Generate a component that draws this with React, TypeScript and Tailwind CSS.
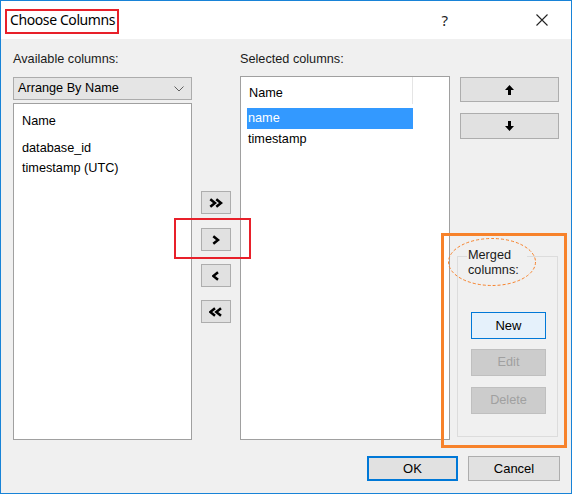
import React from "react";

const sans = "font-['Liberation_Sans',Arial,sans-serif]";

function Chevrons({ dir, double }: { dir: "left" | "right"; double?: boolean }) {
  const one = dir === "right" ? "M1.3 1.2 L6 5 L1.3 8.8" : "M6 1.2 L1.3 5 L6 8.8";
  return (
    <svg width={double ? 14 : 8} height="10" viewBox={double ? "0 0 14 10" : "0 0 8 10"}>
      <path d={one} fill="none" stroke="#000" strokeWidth="2.5" />
      {double && <path d={one} transform="translate(6 0)" fill="none" stroke="#000" strokeWidth="2.5" />}
    </svg>
  );
}

function Arrow({ up }: { up?: boolean }) {
  return (
    <svg width="9" height="10" viewBox="0 0 9 10">
      <path
        d={up ? "M4.5 0 L9 5 L6 5 L6 10 L3 10 L3 5 L0 5 Z" : "M4.5 10 L9 5 L6 5 L6 0 L3 0 L3 5 L0 5 Z"}
        fill="#000"
      />
    </svg>
  );
}

function SmallButton({ children, className }: { children: React.ReactNode; className?: string }) {
  return (
    <div className={`h-[23px] flex items-center justify-center bg-[#e1e1e1] border border-[#adadad] ${className ?? ""}`}>
      {children}
    </div>
  );
}

export default function App() {
  return (
    <div className={`relative w-[572px] h-[494px] border border-[#1883d7] bg-[#f0f0f0] flex flex-col text-[12.7px] text-black ${sans}`}>
      {/* Title bar */}
      <div className="h-[38px] bg-white flex items-center pl-[9px] shrink-0">
        <span className="text-[14px] tracking-[-0.4px] font-['Noto_Sans',sans-serif] leading-none">Choose Columns</span>
        <span className="ml-auto mr-[88px] text-[15px] font-['Noto_Sans',sans-serif] text-[#222]">?</span>
        <svg width="12" height="12" viewBox="0 0 12 12" className="mr-[23px]">
          <path d="M0.5 0.5 L11.5 11.5 M11.5 0.5 L0.5 11.5" stroke="#222" strokeWidth="1.1" />
        </svg>
      </div>

      {/* Body */}
      <div className="flex-1 pl-[12px] pt-[13px]">
        <div className="flex">
          {/* Available columns */}
          <div className="w-[179px] flex flex-col">
            <div className="h-[15px] leading-[15px] text-[#1a1a1a]">Available columns:</div>
            <div className="mt-[10px] h-[23px] bg-[#e5e5e5] border border-[#acacac] flex items-center pl-[4px] pr-[7px]">
              <span>Arrange By Name</span>
              <svg width="10" height="6" viewBox="0 0 10 6" className="ml-auto">
                <path d="M0.5 0.5 L5 5 L9.5 0.5" fill="none" stroke="#606060" strokeWidth="1" />
              </svg>
            </div>
            <div className="mt-[3px] h-[337px] bg-white border border-[#a0a0a0] pl-[8px]">
              <div className="mt-[9px] h-[16px] leading-[16px]">Name</div>
              <div className="mt-[11px] h-[16px] leading-[16px]">database_id</div>
              <div className="mt-[4px] h-[16px] leading-[16px]">timestamp (UTC)</div>
            </div>
          </div>

          {/* Move buttons */}
          <div className="ml-[9px] w-[30px] pt-[139px] flex flex-col">
            <SmallButton>
              <Chevrons dir="right" double />
            </SmallButton>
            <SmallButton className="mt-[14px]">
              <Chevrons dir="right" />
            </SmallButton>
            <SmallButton className="mt-[13px]">
              <Chevrons dir="left" />
            </SmallButton>
            <SmallButton className="mt-[13px]">
              <Chevrons dir="left" double />
            </SmallButton>
          </div>

          {/* Selected columns */}
          <div className="ml-[9px] w-[210px] flex flex-col">
            <div className="h-[15px] leading-[15px] text-[#1a1a1a]">Selected columns:</div>
            <div className="mt-[9px] h-[364px] bg-white border border-[#a0a0a0] flex flex-col">
              <div className="h-[27px] flex">
                <div className="w-[172px] border-r border-[#e5e5e5] pl-[8px] pt-[7px]">Name</div>
              </div>
              <div className="ml-[6px] mt-[4px] w-[166px] h-[21px] bg-[#3399ff] text-white flex items-center pl-[1px]">
                name
              </div>
              <div className="ml-[7px] h-[21px] flex items-center">timestamp</div>
            </div>
          </div>

          {/* Right column */}
          <div className="ml-[7px] w-[102px] flex flex-col">
            <div className="mt-[25px] ml-[3px] w-[99px] h-[25px] bg-[#e1e1e1] border border-[#adadad] flex items-center justify-center">
              <Arrow up />
            </div>
            <div className="mt-[11px] ml-[3px] w-[99px] h-[26px] bg-[#e1e1e1] border border-[#adadad] flex items-center justify-center">
              <Arrow />
            </div>
            <div className="relative mt-[117px] w-[101px] h-[181px] border border-[#dcdcdc] flex flex-col">
              <div className="absolute left-[9px] -top-[9px] w-[60px] bg-[#f0f0f0] pl-[1px] leading-[15px] text-[#1a1a1a]">
                Merged columns:
              </div>
              <div className="mt-[55px] ml-[13px] w-[75px] h-[27px] bg-[#e5f1fb] border border-[#0078d7] flex items-center justify-center text-[13px]">
                New
              </div>
              <div className="mt-[10px] ml-[13px] w-[75px] h-[27px] bg-[#cccccc] border border-[#bfbfbf] text-[#a0a0a0] flex items-center justify-center">
                Edit
              </div>
              <div className="mt-[11px] ml-[13px] w-[75px] h-[27px] bg-[#cccccc] border border-[#bfbfbf] text-[#a0a0a0] flex items-center justify-center">
                Delete
              </div>
            </div>
          </div>
        </div>

        {/* Dialog buttons */}
        <div className="mt-[16px] flex justify-end pr-[11px] gap-[10px]">
          <div className="w-[91px] h-[25px] bg-[#e1e1e1] border-2 border-[#0078d7] flex items-center justify-center text-[13px]">
            OK
          </div>
          <div className="w-[92px] h-[25px] bg-[#e1e1e1] border border-[#adadad] flex items-center justify-center text-[13px]">
            Cancel
          </div>
        </div>
      </div>

      {/* Annotations */}
      <div className="absolute left-[4px] top-[8px] w-[114px] h-[25px] border-2 border-[#e8202a]" />
      <div className="absolute left-[173px] top-[217px] w-[77px] h-[41px] border-2 border-[#e8202a]" />
      <div className="absolute left-[440px] top-[232px] w-[126px] h-[215px] border-[3px] border-[#f7822b]" />
      <svg className="absolute left-[446px] top-[236px]" width="90" height="50" viewBox="0 0 90 50">
        <ellipse cx="45" cy="25" rx="43.5" ry="23.5" fill="none" stroke="#f7822b" strokeWidth="1" strokeDasharray="3 2" />
      </svg>
    </div>
  );
}
